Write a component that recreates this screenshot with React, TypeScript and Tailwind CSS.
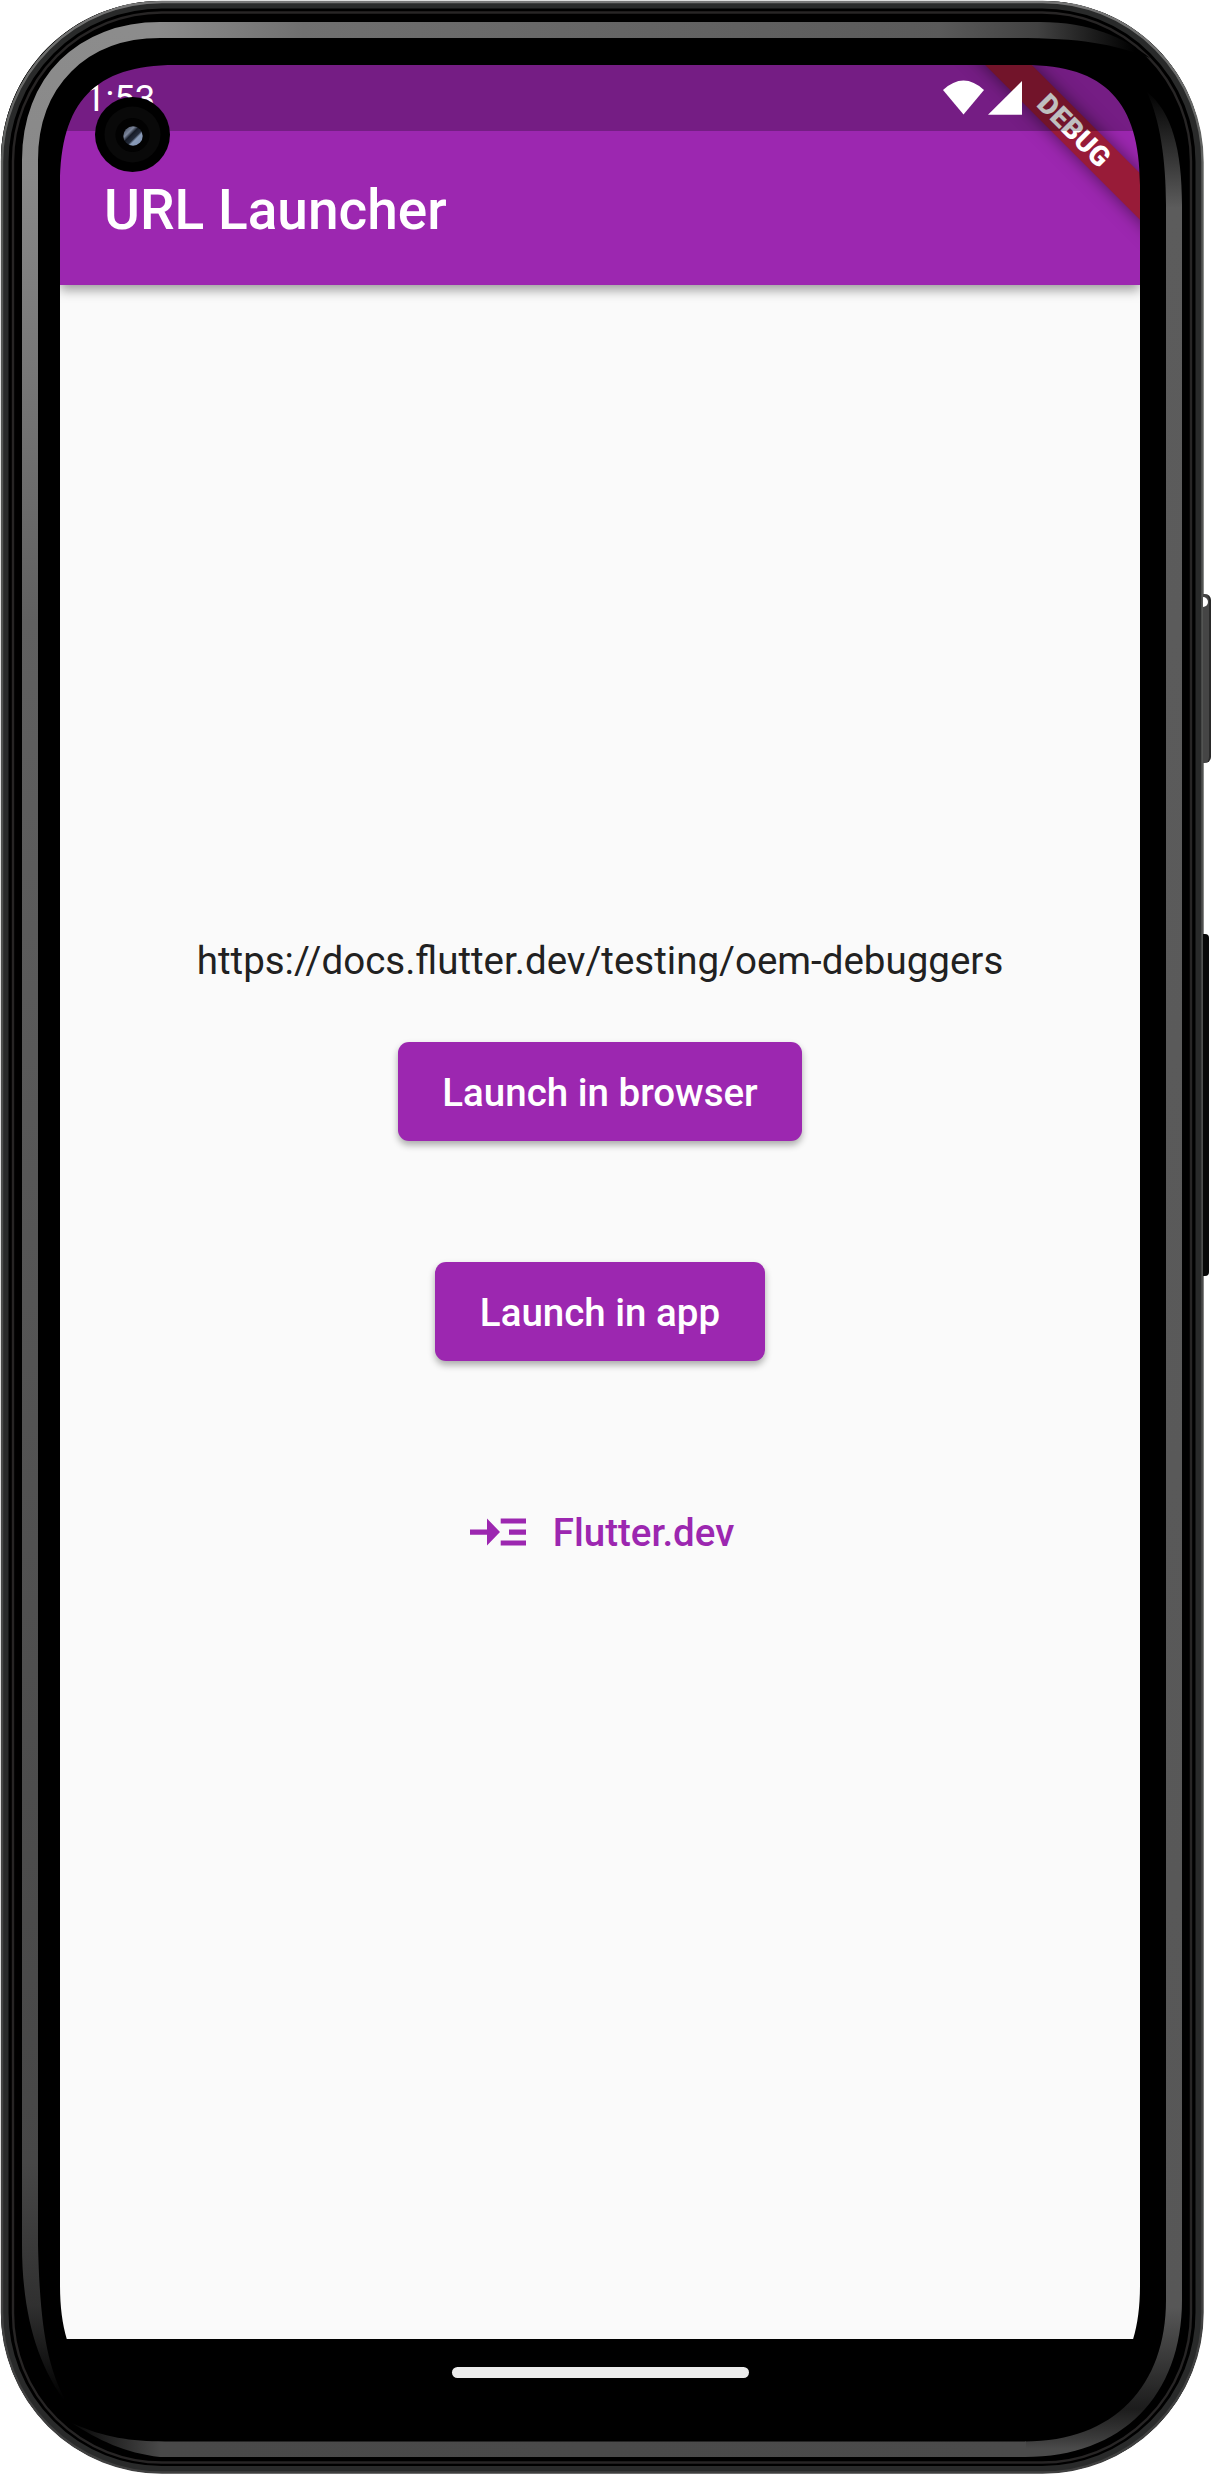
import React from 'react';

const OUTER = 'M1 162C1 72 72 1 162 1H1042C1132 1 1203 72 1203 162V2312C1203 2402 1132 2473 1042 2473H163C73 2473 2 2402 1 2312Z';
const SCREEN = 'M60 185C60 102 95 65 175 65H1025C1105 65 1140 102 1140 185V2285C1140 2368 1105 2405 1025 2405H175C95 2405 60 2368 60 2285Z';

function Bezel() {
  return (
    <svg className="pointer-events-none absolute inset-0" width="1211" height="2474" viewBox="0 0 1211 2474" fill="none" aria-hidden="true">
      <defs>
        <linearGradient id="rim" x1="0" y1="0" x2="0" y2="2474" gradientUnits="userSpaceOnUse">
          <stop offset="0" stopColor="#777" />
          <stop offset="0.08" stopColor="#585a58" />
          <stop offset="1" stopColor="#3f3f3f" />
        </linearGradient>
        <linearGradient id="left" x1="0" y1="30" x2="0" y2="2400" gradientUnits="userSpaceOnUse">
          <stop offset="0" stopColor="#8c8c8c" />
          <stop offset="0.06" stopColor="#898989" />
          <stop offset="0.25" stopColor="#606060" />
          <stop offset="0.9" stopColor="#474747" />
          <stop offset="0.96" stopColor="#303030" />
          <stop offset="1" stopColor="#000" />
        </linearGradient>
        <linearGradient id="top" x1="156" y1="0" x2="1135" y2="0" gradientUnits="userSpaceOnUse">
          <stop offset="0" stopColor="#8c8c8c" />
          <stop offset="0.15" stopColor="#707070" />
          <stop offset="0.8" stopColor="#5a5a5a" />
          <stop offset="0.9" stopColor="#424242" />
          <stop offset="1" stopColor="#000" />
        </linearGradient>
        <linearGradient id="right" x1="0" y1="90" x2="0" y2="2449" gradientUnits="userSpaceOnUse">
          <stop offset="0" stopColor="#000" />
          <stop offset="0.05" stopColor="#5c5c5c" />
          <stop offset="0.94" stopColor="#575757" />
          <stop offset="0.983" stopColor="#1c1c1c" />
          <stop offset="0.995" stopColor="#3a3a3a" />
          <stop offset="1" stopColor="#4b4b4b" />
        </linearGradient>
        <linearGradient id="bottom" x1="65" y1="0" x2="1026" y2="0" gradientUnits="userSpaceOnUse">
          <stop offset="0" stopColor="#000" />
          <stop offset="0.1" stopColor="#494949" />
          <stop offset="1" stopColor="#4b4b4b" />
        </linearGradient>
      </defs>
      {/* Surroundings and black body, with the display cut out */}
      <path fillRule="evenodd" fill="#fff" d={'M0 0H1211V2474H0Z' + OUTER} />
      <path fillRule="evenodd" fill="#000" d={OUTER + SCREEN} />
      {/* Metal rim lines */}
      <rect x="5" y="5" width="1194" height="2464.500" rx="157" stroke="#292a2a" strokeWidth="7" />
      <rect x="2" y="2" width="1200.500" height="2470.500" rx="160" stroke="url(#rim)" strokeWidth="2.400" />
      <rect x="13" y="12.500" width="1178" height="2450" rx="149" stroke="#272525" strokeWidth="2.400" />
      {/* Glass edge reflections */}
      <path d="M30 2246V160C30 82 82 30 160 30" stroke="url(#left)" strokeWidth="16" />
      <path d="M22 2245H38C40 2330 48 2370 68 2405C36 2365 22 2310 22 2245Z" fill="url(#left)" />
      <path d="M159 22H1040C1090 22 1125 38 1150 58C1110 43 1080 38 1010 38H159Z" fill="url(#top)" />
      <path
        d="M1166 2300V205C1166 160 1160 120 1147 92C1172 112 1182 150 1182 205V2300C1182 2396 1122 2457 1025 2457V2441.500C1114 2441.500 1166 2386 1166 2300Z"
        fill="url(#right)"
      />
      <path d="M1026 2457H160C125 2453 98 2440 72 2423C105 2438 130 2441 165 2441.500H1026Z" fill="url(#bottom)" />
    </svg>
  );
}

function Camera() {
  return (
    <svg className="absolute top-[97px] left-[95px]" width="75" height="75" viewBox="0 0 75 75" aria-hidden="true">
      <defs>
        <linearGradient id="lens" x1="0" y1="0" x2="1" y2="1">
          <stop offset="0" stopColor="#333a4d" />
          <stop offset="0.3" stopColor="#7d879c" />
          <stop offset="0.42" stopColor="#161b27" />
          <stop offset="0.58" stopColor="#252c3b" />
          <stop offset="0.66" stopColor="#8a9bb8" />
          <stop offset="0.85" stopColor="#8193b3" />
          <stop offset="1" stopColor="#202636" />
        </linearGradient>
      </defs>
      <circle cx="37.500" cy="37.500" r="37.500" fill="#000" />
      <circle cx="37.500" cy="37.500" r="28" fill="#090909" />
      <circle cx="37.500" cy="38" r="17" fill="#020202" />
      <circle cx="38" cy="39" r="9.700" fill="url(#lens)" />
    </svg>
  );
}

function MenuOpenArrow() {
  return (
    <svg width="56" height="28" viewBox="0 0 56 28" fill="#9c27b0" aria-hidden="true">
      <path d="M0 11.500H17V0.500L30 14L17 27.500V16.700H0Z" />
      <path d="M30.700 0.500H56V5.500H30.700ZM39 11.500H56V16.700H39ZM30.700 22.500H56V27.500H30.700Z" />
    </svg>
  );
}

export default function App() {
  return (
    <div className="relative h-[2474px] w-[1211px] overflow-hidden bg-black px-[60px] pt-[65px] font-['Roboto',sans-serif]">
      <div className="relative isolate flex h-[2340px] w-[1080px] flex-col overflow-hidden bg-[#fafafa]">
        <header className="relative z-10 flex h-[220px] shrink-0 flex-col bg-[#9c27b0] pt-[66px] shadow-[0_5px_11px_rgba(0,0,0,0.38)]">
          <h1 className="flex h-[154px] items-center px-11 pt-[5px] text-[55px] leading-none font-medium whitespace-nowrap text-white">
            URL Launcher
          </h1>
        </header>

        <main className="flex flex-1 flex-col items-center">
          <p className="mt-[650px] h-[52px] text-[38.5px] leading-[52px] whitespace-nowrap text-[#212121]">
            https://docs.flutter.dev/testing/oem-debuggers
          </p>
          <button className="mt-[55.4px] h-[99px] w-[404px] rounded-[11px] bg-[#9c27b0] pt-[3px] text-[38.5px] leading-none font-medium whitespace-nowrap text-white shadow-[0_4px_7px_rgba(0,0,0,0.32)]">
            Launch in browser
          </button>
          <button className="mt-[121px] h-[99px] w-[330px] rounded-[11px] bg-[#9c27b0] pt-[3px] text-[38.5px] leading-none font-medium whitespace-nowrap text-white shadow-[0_4px_7px_rgba(0,0,0,0.32)]">
            Launch in app
          </button>
          <button className="mt-[121px] flex h-[99px] items-center gap-[27px] pl-[4px] text-[38.5px] leading-none font-medium whitespace-nowrap text-[#9c27b0]">
            <MenuOpenArrow />
            <span className="pt-[3px]">Flutter.dev</span>
          </button>
        </main>

        <footer className="flex h-[66px] shrink-0 items-center justify-center bg-black">
          <div className="h-[11px] w-[297px] rounded-full bg-[#ececec]" />
        </footer>

        {/* Debug ribbon, turned 45 degrees over the corner */}
        <div className="absolute top-[49px] right-[-99px] z-20 flex h-[33px] w-[330px] rotate-45 items-center justify-center bg-[#981b38] text-[28px] leading-none font-black text-white shadow-[0_0_17px_rgba(0,0,0,0.5)]">
          DEBUG
        </div>
        <div className="absolute inset-x-0 top-0 z-20 h-[66px] bg-black/25" />

        {/* System status items */}
        <div className="absolute top-[11px] left-[25px] z-30 text-[36.5px] leading-[45px] text-white">1:53</div>
        <svg className="absolute top-[15px] left-[883px] z-30" width="80" height="35" viewBox="0 0 80 35" fill="#fff" aria-hidden="true">
          <path d="M0 10Q20.500 -9 41 10L20.500 34.500Z" />
          <path d="M45 34.800L79 1V34.800Z" />
        </svg>
      </div>
      <Bezel />
      <Camera />
      <div className="absolute top-[594px] left-[1203px] h-[169px] w-[8px] rounded-r-[6px] border-r-2 border-[#292929] bg-[#454545]">
        <div className="mt-[3px] h-[10px] w-[5px] rounded-r-full bg-white" />
      </div>
      <div className="absolute top-[934px] left-[1203px] h-[342px] w-[6px] rounded-r-[4px] bg-[#080808]" />
    </div>
  );
}
